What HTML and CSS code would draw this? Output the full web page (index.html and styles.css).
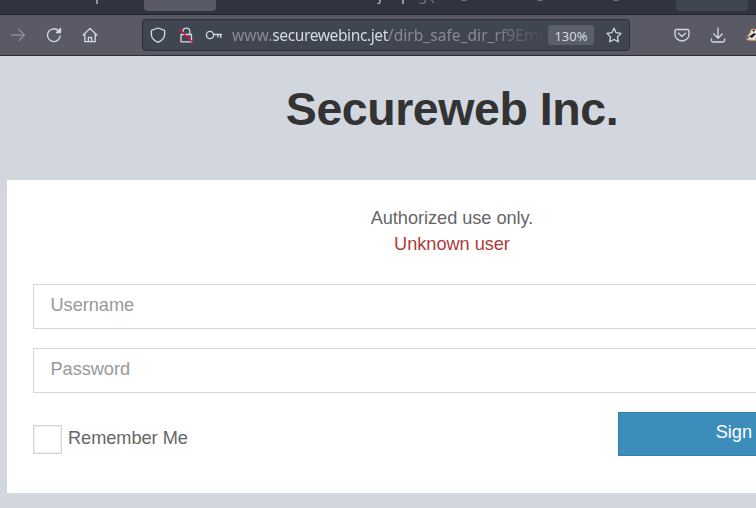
FILE: index.html
```html
<!DOCTYPE html>
<html lang="en">
<head>
<meta charset="utf-8">
<title>Secureweb Inc.</title>
<link rel="stylesheet" href="styles.css">
</head>
<body>
<div class="tabs">
  <div class="tab-text first"><span>p</span><span>://</span></div>
  <div class="tab active"></div>
  <div class="tab-text second"><span>j</span><span>p</span><span class="faded">g</span><span class="faded">(</span><span class="faded raised">g</span><span class="faded raised">g</span><span class="faded raised">g</span></div>
  <div class="tab last"></div>
</div>
<div class="toolbar">
  <svg class="icon dim forward" viewBox="0 0 16 16"><path d="M1.500 8h13M9 2.500 14.500 8 9 13.500"/></svg>
  <svg class="icon reload" viewBox="0 0 16 16"><path d="M14.200 8.800A6.400 6.400 0 1 1 12.600 3.900"/><path class="solid" d="M14.500 1.500v4h-4z"/></svg>
  <svg class="icon home" viewBox="0 0 16 16"><path d="M1.200 8 8 1.400 14.800 8M2.800 7v7.700h10.400V7M6.400 14.500V10.400h3.200v4.100"/></svg>
  <div class="urlbar">
    <svg class="icon shield" viewBox="0 0 16 16"><path d="M8 1 14.600 3.300V7.600C14.600 11 12 13.700 8 15.400 4 13.700 1.400 11 1.400 7.600V3.300Z"/></svg>
    <svg class="icon lock" viewBox="0 0 16 16"><path d="M3 7.500h10.500v7.300H3zM5 4.500a3.400 3.400 0 0 1 6.800 0V7"/><path class="strike" d="M1.500 2.500 14.700 15.200"/></svg>
    <svg class="icon key" viewBox="0 0 18 16"><circle cx="5" cy="8" r="3.600"/><path d="M8.600 7.500H16.500M13 7.500v2.500M15.800 7.500v3"/></svg>
    <div class="url">www.<b>securewebinc.jet</b>/dirb_safe_dir_rf9Emc</div>
    <div class="zoom">130%</div>
    <svg class="icon star" viewBox="0 0 16 16"><path d="M8 1.200 10.100 5.700 15 6.400 11.500 9.900 12.300 14.800 8 12.500 3.700 14.800 4.500 9.900 1 6.400 5.900 5.700Z"/></svg>
  </div>
  <svg class="icon pocket" viewBox="0 0 16 16"><path d="M2.500 2.500h11q1.500 0 1.500 1.500v3.500a7 6.500 0 0 1-14 0V4q0-1.500 1.500-1.500ZM4.500 6.200 8 9.400l3.500-3.200"/></svg>
  <svg class="icon download" viewBox="0 0 16 16"><path d="M8 1v10M3.800 7 8 11.200 12.200 7M1.500 12v1.500q0 1.500 1.500 1.500h10q1.500 0 1.500-1.500V12"/></svg>
  <svg class="addon" viewBox="0 0 20 16"><path fill="#e8e2da" stroke="#c78b5d" d="M1 13 .500 10 4 6 5 2.500 8 2l3 1 6-2 3 4-2 9z"/><path fill="#252831" d="M.500 10 2.500 9v2.500H1zM3 9.500 8 6l2 1-4 4zM6 3h3L8 5zM9 12l7-5 2 3-5 3z"/></svg>
</div>
<main class="page">
  <h1>Secureweb Inc.</h1>
  <form class="card">
    <p class="message">Authorized use only.<br><span class="error">Unknown user</span></p>
    <input class="field" type="text" placeholder="Username">
    <input class="field" type="password" placeholder="Password">
    <div class="actions">
      <label class="remember"><span class="box"></span><span class="label">Remember Me</span></label>
      <button class="submit" type="button">Sign In</button>
    </div>
  </form>
</main>
</body>
</html>
```
FILE: styles.css
```css
* { box-sizing: border-box; }
body { margin: 0; height: 508px; overflow: hidden; background: #d2d6df; font-family: "Liberation Sans", Arial, sans-serif; }
.tabs { height: 15px; display: flex; align-items: flex-start; overflow: hidden; background: #2f343f; border-bottom: 1px solid #21242d; }
.tab { flex: none; width: 72px; height: 11px; border-radius: 0 0 4px 4px; background: #5a5a67; }
.tab.last { background: #404552; }
.tab-text { flex: none; display: grid; margin-top: -16px; font: 15px/20px "Noto Sans", sans-serif; color: #b9bdc8; white-space: nowrap; }
.tab-text.first { width: 144px; padding-left: 95px; grid-template-columns: 9px 40px; }
.tab-text.second { width: 460px; padding-left: 162px; grid-template-columns: 23px 17px 12px 30px 76px 76px 64px; }
.faded { opacity: .5; }
.raised { margin-top: -3px; }
.toolbar { height: 41px; display: flex; align-items: center; background: #5a5a67; border-bottom: 1px solid #2b2e39; }
.icon { flex: none; width: 16px; height: 16px; fill: none; stroke: #d3dae3; stroke-width: 1.3; stroke-linejoin: round; stroke-linecap: round; }
.dim { opacity: .4; }
.solid { fill: #d3dae3; }
.strike { stroke: #e2143c; stroke-width: 1.5; }
.forward { margin-left: 10px; }
.reload { margin-left: 20px; }
.home { margin-left: 20px; }
.urlbar { flex: none; width: 488px; height: 32px; margin-left: 44px; padding: 0 7px; display: flex; align-items: center; background: #404552; border: 1px solid #2b2e39; border-radius: 4px; }
.lock { margin-left: 12px; }
.key { width: 18px; margin-left: 11px; }
.url { flex: none; width: 310px; margin-left: 9px; overflow: hidden; white-space: nowrap; font: 15.600px/26px "Noto Sans", sans-serif; color: #878b96; -webkit-mask-image: linear-gradient(to right, #000 260px, transparent 314px); mask-image: linear-gradient(to right, #000 260px, transparent 314px); }
.url b { font-weight: 400; letter-spacing: -.43px; color: #d3dae3; }
.zoom { flex: none; width: 46px; height: 20px; margin-left: 6px; border-radius: 3px; background: #5a5f6b; color: #d3dae3; font: 13px/22px "Noto Sans", sans-serif; text-align: center; }
.star { margin-left: 12px; }
.pocket { margin-left: 44px; }
.download { margin-left: 20px; }
.addon { flex: none; width: 20px; height: 16px; margin-left: 20px; }
.page { width: 890px; margin-left: 7px; }
h1 { margin: 0; height: 124px; padding-top: 27px; font-size: 46.500px; line-height: 52px; letter-spacing: -.45px; text-align: center; color: #333; }
.card { height: 313px; padding: 25px 26px 26px; background: #fff; color: #666; font-size: 18.200px; line-height: 26px; letter-spacing: -.04px; }
.message { margin: 0 0 27px; text-align: center; }
.error { color: #b03a3a; }
.field { display: block; width: 100%; height: 45px; margin: 0 0 19px; padding: 0 16.500px 2px; border: 1px solid #d2d6de; border-radius: 0; outline: 0; background: #fff; font: inherit; letter-spacing: inherit; }
.field::placeholder { color: #999; opacity: 1; }
.actions { display: flex; justify-content: space-between; }
.remember { display: flex; align-items: center; gap: 6px; height: 55px; }
.label { padding-bottom: 4px; }
.box { width: 29px; height: 29px; border: 1px solid #d4d3cd; box-shadow: inset 0 0 0 1px #f1f0ed; }
.submit { width: 252px; height: 44px; margin-right: 1px; padding: 0 0 5px; border: 1px solid #367fa9; background: #3c8dbc; color: #fff; font: inherit; }
```
